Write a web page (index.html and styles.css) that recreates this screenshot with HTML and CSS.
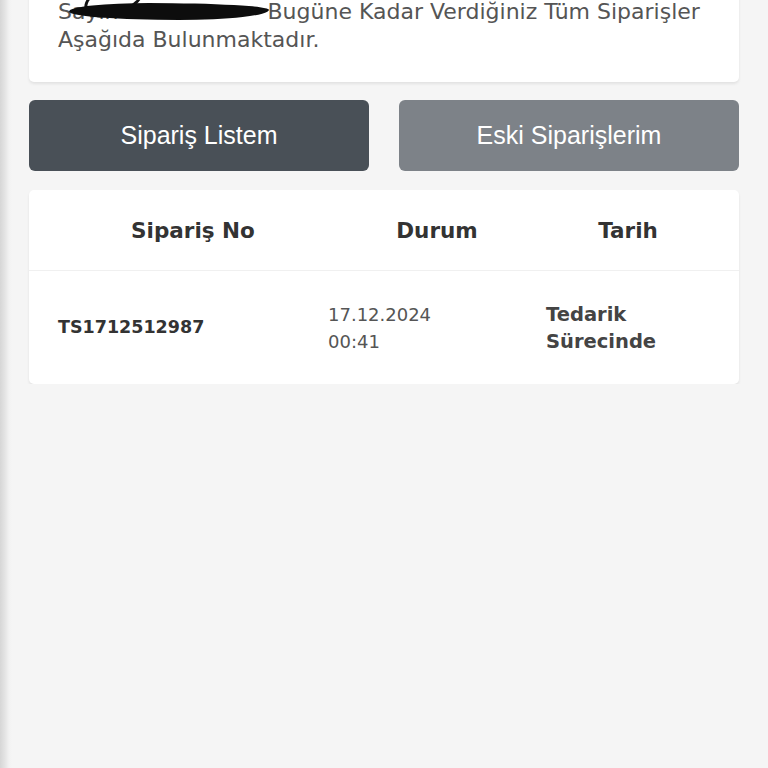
FILE: index.html
```html
<!DOCTYPE html>
<html lang="tr">
<head>
    <meta charset="UTF-8">
    <meta name="viewport" content="width=device-width, initial-scale=1.0">
    <title>Siparişlerim</title>
    <link rel="stylesheet" href="styles.css">
</head>
<body>
    <div class="contenedor">
        <div class="tarjeta bienvenida">
            <p>Sayın<span class="tachado"></span> Bugüne Kadar Verdiğiniz Tüm Siparişler Aşağıda Bulunmaktadır.</p>
        </div>

        <div class="botones">
            <button class="boton activo">Sipariş Listem</button>
            <button class="boton">Eski Siparişlerim</button>
        </div>

        <div class="tarjeta tabla">
            <table>
                <thead>
                    <tr>
                        <th class="col1">Sipariş No</th>
                        <th class="col2">Durum</th>
                        <th class="col3">Tarih</th>
                    </tr>
                </thead>
                <tbody>
                    <tr>
                        <td class="numero">TS1712512987</td>
                        <td class="fecha">17.12.2024<br>00:41</td>
                        <td class="estado">Tedarik<br>Sürecinde</td>
                    </tr>
                </tbody>
            </table>
        </div>
    </div>
</body>
</html>
```

FILE: styles.css
```css
html{
    background: #f5f5f5;
    background: linear-gradient(to right, #d6d6d6 0, #e4e4e4 5px, #f2f2f2 9px, #f5f5f5 12px);
    min-height: 100%;
}

body{
    margin: 0;
    font-family: 'DejaVu Sans', 'Open Sans', sans-serif;
    color: #333;
}

.contenedor{
    padding: 0 29px;
}

.tarjeta{
    background-color: #fff;
    border-radius: 5px;
    box-shadow: 0 2px 3px rgba(0, 0, 0, 0.08);
}

.bienvenida{
    margin-top: -32px;
    padding: 30px 29px 28px 29px;
}

.bienvenida p{
    margin: 0;
    font-size: 22px;
    line-height: 28px;
    color: #555;
}

/* nombre tapado con rotulador */
.tachado{
    display: inline-block;
    position: relative;
    width: 142px;
    height: 10px;
}

.tachado::after{
    content: "";
    position: absolute;
    left: -50px;
    right: -8px;
    top: -6px;
    height: 17px;
    background: #0d0d0d;
    border-radius: 40% 60% 45% 55% / 50% 40% 60% 50%;
}

.tachado::before{
    content: "";
    position: absolute;
    left: -36px;
    top: -26px;
    width: 56px;
    height: 26px;
    border: 3px solid #111;
    border-radius: 50%;
    border-top-color: transparent;
    border-right-color: transparent;
    transform: rotate(-20deg);
}

.botones{
    display: flex;
    gap: 30px;
    margin-top: 18px;
}

.boton{
    flex: 1;
    height: 71px;
    border: 0;
    border-radius: 6px;
    font-family: 'Liberation Sans', Arial, sans-serif;
    font-size: 25px;
    color: #fff;
    background-color: #7d8288;
}

.boton.activo{
    background-color: #495057;
}

.tabla{
    margin-top: 19px;
    overflow: hidden;
}

table{
    width: 100%;
    border-collapse: collapse;
}

th{
    height: 80px;
    font-size: 21.5px;
    font-weight: bold;
    color: #333;
    text-align: center;
    border-bottom: 1px solid #f0f0f0;
    padding: 0;
}

th.col1{
    width: 270px;
    padding-left: 29px;
}

th.col2{
    width: 218px;
}

th.col3{
    padding-right: 29px;
}

td{
    height: 113px;
    padding: 0;
    line-height: 27px;
    vertical-align: middle;
    text-align: left;
}

.numero{
    padding-left: 29px;
    font-size: 17.5px;
    font-weight: bold;
    color: #333;
}

.fecha{
    font-size: 18px;
    color: #555;
}

.estado{
    padding-right: 29px;
    font-size: 19.5px;
    font-weight: bold;
    color: #444;
}
```
